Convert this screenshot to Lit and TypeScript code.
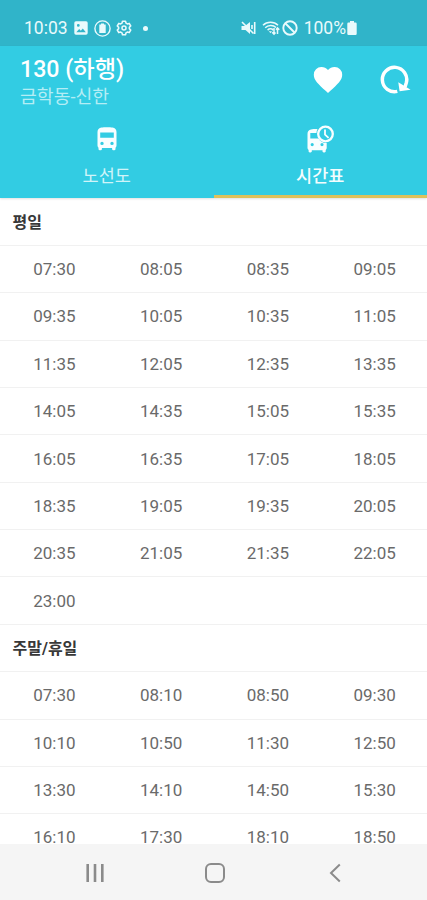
import { LitElement, html, css, svg } from "lit";
import { customElement } from "lit/decorators.js";

const WEEKDAY = [
  "07:30", "08:05", "08:35", "09:05",
  "09:35", "10:05", "10:35", "11:05",
  "11:35", "12:05", "12:35", "13:35",
  "14:05", "14:35", "15:05", "15:35",
  "16:05", "16:35", "17:05", "18:05",
  "18:35", "19:05", "19:35", "20:05",
  "20:35", "21:05", "21:35", "22:05",
  "23:00",
];

const WEEKEND = [
  "07:30", "08:10", "08:50", "09:30",
  "10:10", "10:50", "11:30", "12:50",
  "13:30", "14:10", "14:50", "15:30",
  "16:10", "17:30", "18:10", "18:50",
];

const rows = (times: string[]) => {
  const out: string[][] = [];
  for (let i = 0; i < times.length; i += 4) out.push(times.slice(i, i + 4));
  return out;
};

const icon = (w: number, h: number, body: unknown) =>
  html`<svg width=${w} height=${h} viewBox="0 0 ${w} ${h}" fill="none">${body}</svg>`;

const picture = icon(14, 14, svg`<path fill="currentColor" fill-rule="evenodd" d="M2 .2h10A1.700 1.700 0 0 1 13.700 2v10a1.700 1.700 0 0 1-1.700 1.700H2A1.700 1.700 0 0 1 .3 12V2A1.700 1.700 0 0 1 2 .2zM2.300 11.200h9.500L8.800 7.400 6.800 9.800 5.200 7.900zM4.300 3a1.400 1.400 0 1 0 0 2.800 1.400 1.400 0 0 0 0-2.800z"/>`);
const cell = icon(17, 17, svg`<circle cx="8.500" cy="8.500" r="7.600" stroke="currentColor" stroke-width="1.400"/><path fill="currentColor" d="M5.300 4.500H7V3.500h3v1h1.700v8.500H5.300z"/>`);
const gear = icon(16, 16, svg`<path stroke="currentColor" stroke-width="1.600" stroke-linejoin="round" d="M6.500 1.200h3l.5 1.900 1.300.8 1.900-.5 1.500 2.500L13.400 7.200v1.600l1.300 1.300-1.500 2.500-1.900-.5-1.300.8-.5 1.900h-3L6 12.900l-1.300-.8-1.900.5-1.500-2.500 1.300-1.300V7.200L1.300 5.900l1.500-2.500 1.900.5L6 3.100z"/><circle cx="8" cy="8" r="2" stroke="currentColor" stroke-width="1.500"/>`);
const mute = icon(15, 14, svg`<path fill="currentColor" d="M.5 5h3.500L9 1v12L4.500 9H.5z"/><path stroke="currentColor" stroke-width="1.600" d="M1 1 12.500 12.500M11 4v4M13.700 1v12"/>`);
const wifi = icon(18, 16, svg`<g stroke="currentColor" stroke-width="1.500"><path d="M1 5.200C5 1.200 12 1.200 16 5.200M3.200 7.700c3-3 8-3 10.800-.2M5.600 10.100c1.700-1.700 4-1.700 5.700 0"/><path d="M12 8v6m-1.800-1.800L12 14.200l1.500-1.800M15.500 14V8m-1.500 1.700 1.500-1.900 1.800 1.900"/></g><path fill="currentColor" d="m6.800 11.300 1.700 2 1.500-2z"/>`);
const blocked = icon(16, 16, svg`<circle cx="8" cy="8" r="6.700" stroke="currentColor" stroke-width="1.900"/><path stroke="currentColor" stroke-width="1.900" d="m3.500 3.500 9 9"/>`);
const battery = icon(10, 14, svg`<path fill="currentColor" d="M3 0h4v1.500h1.500a1.200 1.200 0 0 1 1.200 1.200v10a1.200 1.200 0 0 1-1.200 1.200h-7A1.200 1.200 0 0 1 .3 12.700v-10a1.200 1.200 0 0 1 1.200-1.200H3z"/>`);
const heart = icon(30, 28, svg`<path fill="currentColor" d="M15 27 12.900 25.100C5.500 18.400.8 14.200.8 8.800A7.500 7.500 0 0 1 8.500 1.100c2.500 0 4.900 1.200 6.500 3 1.600-1.800 4-3 6.500-3a7.500 7.500 0 0 1 7.700 7.700c0 5.400-4.700 9.600-12.100 16.300z"/>`);
const reload = icon(32, 30, svg`<path stroke="currentColor" stroke-width="3.500" d="M18.300 26.400A12.200 12.200 0 1 1 27.300 17.800L26 22"/><path fill="currentColor" d="M19.300 17.200 31.600 24.800 20.600 26.200z"/>`);
const bus = icon(20, 24, svg`<path fill="currentColor" fill-rule="evenodd" d="M4.500.6C7 0 13 0 15.500.6 18 1.200 19.500 2.500 19.500 5v13.500c0 1-.4 1.700-1 2.200V22a1.300 1.300 0 0 1-1.300 1.300h-.8A1.300 1.300 0 0 1 15.100 22v-.9H4.900v.9a1.300 1.300 0 0 1-1.300 1.300h-.8A1.300 1.300 0 0 1 1.500 22v-1.300c-.6-.5-1-1.200-1-2.200V5C.5 2.500 2 1.200 4.500.6zM3.200 5.500v5.300h13.600V5.500zM5 14.700a1.700 1.700 0 1 0 0 3.400 1.700 1.700 0 0 0 0-3.400zm10 0a1.700 1.700 0 1 0 0 3.400 1.700 1.700 0 0 0 0-3.400z"/>`);
const busClock = icon(28, 28, svg`<path fill="currentColor" fill-rule="evenodd" d="M5 4.600c2-.5 4.500-.6 6.500-.5-.7 1.300-1 2.600-1 4H4.300v5.500h8.200a9 9 0 0 0 8.200 4.400v5c0 .8-.4 1.500-1 2v1.200c0 .7-.5 1.200-1.200 1.200h-.8c-.7 0-1.200-.5-1.200-1.200v-.9H5.800v.9c0 .7-.5 1.200-1.200 1.200h-.8c-.7 0-1.200-.5-1.200-1.200v-1.200c-.7-.5-1.100-1.200-1.100-2V9c0-2.700 1.200-3.900 3.500-4.400zM6.200 18a1.600 1.600 0 1 0 0 3.200 1.600 1.600 0 0 0 0-3.200zm9.800 0a1.600 1.600 0 1 0 0 3.200 1.600 1.600 0 0 0 0-3.200z"/><circle cx="19.500" cy="9" r="7.300" stroke="currentColor" stroke-width="2.300"/><path stroke="currentColor" stroke-width="1.800" d="M19 4.400v5.200l3.600 3.200"/>`);
const recents = icon(20, 20, svg`<path stroke="currentColor" stroke-width="2.600" d="M2.700 1v18M10 1v18M17.300 1v18"/>`);
const home = icon(20, 20, svg`<rect x="1" y="1" width="18" height="18" rx="5" stroke="currentColor" stroke-width="2"/>`);
const back = icon(12, 20, svg`<path stroke="currentColor" stroke-width="2" d="M10.800 1.500 2 10l8.800 8.500"/>`);

@customElement("app-root")
export class AppRoot extends LitElement {
  static styles = css`
    :host {
      display: flex;
      flex-direction: column;
      width: 100%;
      height: 900px;
      overflow: hidden;
      background: #fff;
      color: #6a6a6a;
      font-family: Roboto, "Noto Sans CJK KR", sans-serif;
    }
    svg { display: block; flex: none; }
    .status {
      flex: none;
      box-sizing: border-box;
      height: 46px;
      padding: 10px 69px 0 24px;
      display: flex;
      align-items: center;
      background: #30b4c9;
      color: #e9fafc;
      font-size: 17.5px;
    }
    .clock { width: 43px; margin-right: 7px; white-space: nowrap; }
    .notes { display: flex; align-items: center; gap: 6px; }
    .notes svg + svg + svg { margin-left: -1px; }
    .dot { width: 5px; height: 5px; border-radius: 50%; background: currentColor; margin-left: 5px; }
    .signals { margin-left: auto; display: flex; align-items: center; gap: 5px; }
    .signals .blocked { margin-left: -3px; }
    .signals .battery { margin-left: -4px; }
    .signals svg:first-child { margin-right: 1px; }
    .bar {
      flex: none;
      height: 152px;
      background: #32cce3;
      color: #fff;
      display: flex;
      flex-direction: column;
      position: relative;
      z-index: 1;
      box-shadow: 0 1px 2px rgba(0, 0, 0, 0.12);
    }
    .head { height: 68px; display: flex; padding: 0 16px 0 20px; }
    .titles { flex: 1; padding-top: 8px; white-space: nowrap; }
    .title { font-size: 23.2px; line-height: 30px; font-weight: 500; }
    .route { font-size: 18.3px; line-height: 26px; color: #b4edf5; font-weight: 400; }
    .actions { display: flex; gap: 36px; align-items: center; }
    .tabs { flex: 1; display: grid; grid-template-columns: 1fr 1fr; }
    .tab {
      display: flex;
      flex-direction: column;
      align-items: center;
      color: #d0f4f9;
      font-size: 17.5px;
      border-bottom: 3px solid transparent;
    }
    .tab.active { color: #f4fdfe; border-bottom-color: #dec15a; font-weight: 500; }
    .glyph { height: 49px; display: flex; align-items: center; justify-content: center; color: #f8feff; }
    .label { line-height: 27px; }
    .list { flex: 1; min-height: 0; overflow: hidden; padding-top: 0.6px; }
    .section, .row { box-sizing: border-box; height: 47.36px; border-bottom: 1px solid #f1f1f1; }
    .section {
      padding: 2px 0 0 12.5px;
      display: flex;
      align-items: center;
      font-size: 16px;
      line-height: 24px;
      font-weight: 700;
      color: #383838;
    }
    .row { display: grid; grid-template-columns: repeat(4, 1fr); align-items: center; padding-left: 1px; margin-right: -1px; }
    .time { text-align: center; font-size: 17px; line-height: 12px; }
    .nav {
      flex: none;
      height: 56px;
      padding: 2px 86px 0 85px;
      box-sizing: border-box;
      display: grid;
      grid-template-columns: 20px 1fr 12px;
      align-items: center;
      background: #f5f5f5;
      color: #8b8b8b;
    }
    .home { justify-self: center; padding-right: 5px; }
  `;

  private section(name: string, times: string[]) {
    return html`
      <div class="section">${name}</div>
      ${rows(times).map((r) => html`<div class="row">${r.map((t) => html`<span class="time">${t}</span>`)}</div>`)}
    `;
  }

  render() {
    return html`
      <div class="status">
        <span class="clock">10:03</span>
        <div class="notes">${picture}${cell}${gear}<span class="dot"></span></div>
        <div class="signals">
          ${mute}${wifi}<span class="blocked">${blocked}</span><span>100%</span><span class="battery">${battery}</span>
        </div>
      </div>
      <header class="bar">
        <div class="head">
          <div class="titles">
            <div class="title">130 (하행)</div>
            <div class="route">금학동-신한</div>
          </div>
          <div class="actions">${heart}${reload}</div>
        </div>
        <nav class="tabs">
          <div class="tab"><span class="glyph">${bus}</span><span class="label">노선도</span></div>
          <div class="tab active"><span class="glyph">${busClock}</span><span class="label">시간표</span></div>
        </nav>
      </header>
      <main class="list">${this.section("평일", WEEKDAY)}${this.section("주말/휴일", WEEKEND)}</main>
      <footer class="nav">${recents}<span class="home">${home}</span>${back}</footer>
    `;
  }
}
